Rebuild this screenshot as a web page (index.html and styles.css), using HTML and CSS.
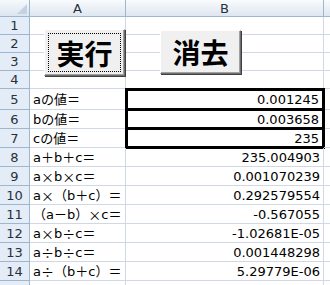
FILE: index.html
```html
<!DOCTYPE html>
<html lang="ja">
  <head>
    <meta charset="UTF-8" />
    <title>計算シート</title>
    <link rel="stylesheet" href="styles.css">
  </head>
  <body>
    <div class="sheet">
      <div class="corner"></div><div class="colhead">A</div><div class="colhead">B</div><div class="colhead"></div>

      <div class="rowhead">1</div><div class="cell"></div><div class="cell"></div><div class="cell"></div>
      <div class="rowhead">2</div><div class="cell"></div><div class="cell"></div><div class="cell"></div>
      <div class="rowhead">3</div><div class="cell"></div><div class="cell"></div><div class="cell"></div>
      <div class="rowhead">4</div><div class="cell"></div><div class="cell"></div><div class="cell"></div>

      <div class="rowhead">5</div><div class="cell">aの値＝</div><div class="cell num box">0.001245</div><div class="cell"></div>
      <div class="rowhead">6</div><div class="cell">bの値＝</div><div class="cell num box mid">0.003658</div><div class="cell"></div>
      <div class="rowhead">7</div><div class="cell">cの値＝</div><div class="cell num box mid">235</div><div class="cell"></div>
      <div class="rowhead">8</div><div class="cell">a＋b＋c＝</div><div class="cell num">235.004903</div><div class="cell"></div>
      <div class="rowhead">9</div><div class="cell">a<span class="w">×</span>b<span class="w">×</span>c＝</div><div class="cell num">0.001070239</div><div class="cell"></div>
      <div class="rowhead">10</div><div class="cell">a<span class="w">×</span>（b＋c）＝</div><div class="cell num">0.292579554</div><div class="cell"></div>
      <div class="rowhead">11</div><div class="cell">（a－b）<span class="w">×</span>c＝</div><div class="cell num">-0.567055</div><div class="cell"></div>
      <div class="rowhead">12</div><div class="cell">a<span class="w">×</span>b<span class="w">÷</span>c＝</div><div class="cell num">-1.02681E-05</div><div class="cell"></div>
      <div class="rowhead">13</div><div class="cell">a<span class="w">÷</span>b<span class="w">÷</span>c＝</div><div class="cell num">0.001448298</div><div class="cell"></div>
      <div class="rowhead">14</div><div class="cell">a<span class="w">÷</span>（b＋c）＝</div><div class="cell num">5.29779E-06</div><div class="cell"></div>
      <div class="rowhead">15</div><div class="cell"></div><div class="cell"></div><div class="cell"></div>

      <!-- form buttons float over the cells -->
      <button class="btn run"><span class="focus">実行</span></button>
      <button class="btn clear"><span>消去</span></button>
    </div>
  </body>
</html>
```
FILE: styles.css
```css
* {
  box-sizing: border-box;
}
body {
  margin: 0;
  overflow: hidden;
  background: #fff;
  font-family: "DejaVu Sans", "Noto Sans CJK JP", sans-serif;
  font-size: 13px;
  color: #000;
}
.sheet {
  position: relative;
  display: grid;
  grid-template-columns: 30px 96px 198px 20px;
  grid-template-rows: 17px repeat(4, 18px) 21px repeat(9, 19px) 19px;
}
.corner {
  background: linear-gradient(#f6f9fc, #dce5f1);
  border-right: 1px solid #9eb6ce;
  border-bottom: 1px solid #9eb6ce;
  display: flex;
  justify-content: flex-end;
  align-items: flex-end;
  padding: 2px;
}
.corner::after {
  content: "";
  border-left: 10px solid transparent;
  border-bottom: 10px solid #c3d1e2;
}
.colhead {
  background: linear-gradient(#f9fbfd, #dfe6f0);
  border-right: 1px solid #9eb6ce;
  border-bottom: 1px solid #9eb6ce;
  display: flex;
  align-items: center;
  justify-content: center;
  color: #27313e;
  font-size: 13px;
}
.rowhead {
  background: #e4ecf7;
  border-right: 1px solid #9eb6ce;
  border-bottom: 1px solid #9eb6ce;
  display: flex;
  align-items: center;
  justify-content: center;
  color: #27313e;
  line-height: 1;
}
.cell {
  border-right: 1px solid #d0d7e5;
  border-bottom: 1px solid #d0d7e5;
  padding: 0 3px;
  display: flex;
  align-items: center;
  white-space: nowrap;
  line-height: 1;
}
.w {
  font-family: "Noto Sans CJK JP", sans-serif;
  font-variant-east-asian: full-width;
}
.num {
  justify-content: flex-end;
}
.box {
  border: 2px solid #000;
  box-shadow: 0 0 0 1px #000;
}
.box.mid {
  border-top-width: 1px;
}
.btn {
  position: absolute;
  top: 29px;
  width: 81px;
  height: 47px;
  padding: 3px;
  display: flex;
  background: #f0f0f0;
  border: 1px solid;
  border-color: #fff #6d6d6d #6d6d6d #fff;
  box-shadow: 1px 1px 0 #404040, inset -1px -1px 0 #a0a0a0;
  font-family: "Noto Sans CJK JP", sans-serif;
  font-weight: bold;
  font-size: 28px;
  color: #000;
}
.btn span {
  flex: 1;
  display: flex;
  align-items: center;
  justify-content: center;
  line-height: 1;
  border: 1px solid transparent;
}
.btn .focus {
  border: 1px dotted #000;
}
.run {
  left: 44px;
}
.clear {
  left: 160px;
  top: 30px;
  height: 44px;
}
```
